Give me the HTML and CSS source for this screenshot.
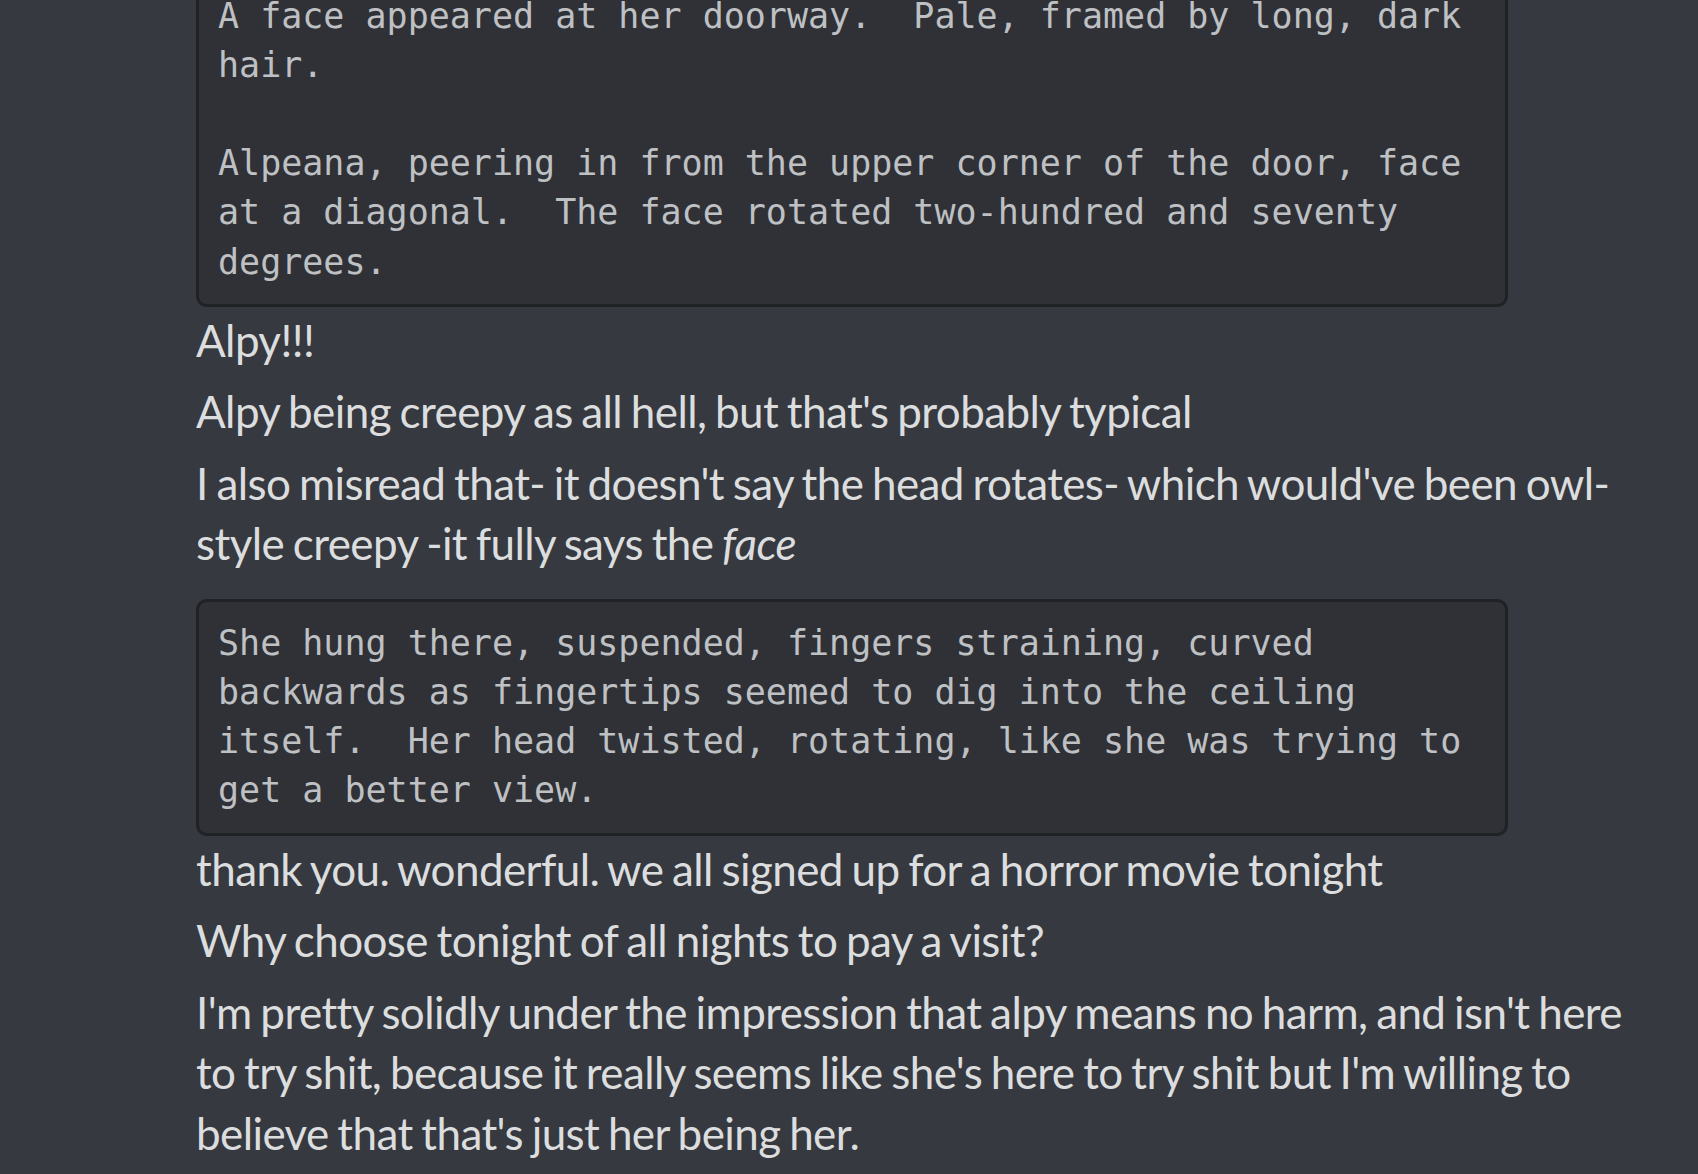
FILE: index.html
```html
<!DOCTYPE html>
<html lang="en">
<head>
<meta charset="utf-8">
<title>Chat</title>
<link rel="stylesheet" href="styles.css">
</head>
<body>
<main class="chat">
  <div class="message">
    <pre class="codeblock"><code>A face appeared at her doorway.  Pale, framed by long, dark hair.

Alpeana, peering in from the upper corner of the door, face at a diagonal.  The face rotated two-hundred and seventy degrees.</code></pre>
    <p class="text">Alpy!!!</p>
  </div>
  <div class="message">
    <p class="text">Alpy being creepy as all hell, but that's probably typical</p>
  </div>
  <div class="message">
    <p class="text">I also misread that- it doesn't say the head rotates- which would've been owl-style creepy -it fully says the <em>face</em></p>
  </div>
  <div class="message">
    <pre class="codeblock"><code>She hung there, suspended, fingers straining, curved backwards as fingertips seemed to dig into the ceiling itself.  Her head twisted, rotating, like she was trying to get a better view.</code></pre>
    <p class="text">thank you. wonderful. we all signed up for a horror movie tonight</p>
  </div>
  <div class="message">
    <p class="text">Why choose tonight of all nights to pay a visit?</p>
  </div>
  <div class="message">
    <p class="text">I'm pretty solidly under the impression that alpy means no harm, and isn't here to try shit, because it really seems like she's here to try shit but I'm willing to believe that that's just her being her.</p>
  </div>
</main>
</body>
</html>
```

FILE: styles.css
```css
html, body {
  margin: 0;
  padding: 0;
  background: #36393f;
  overflow: hidden;
}

.chat {
  margin-top: -48px;
  padding-left: 196px;
  width: 1458px;
}

.message {
  padding: 5.5px 0;
}

.codeblock {
  box-sizing: border-box;
  width: 90%;
  margin: 14px 0 3px;
  padding: 17px 19px;
  background: #2f3136;
  border: 3px solid #202225;
  border-radius: 11px;
  color: #bec0c3;
  font-family: "DejaVu Sans Mono", monospace;
  font-size: 35px;
  line-height: 49.2px;
  white-space: pre-wrap;
}

.codeblock code {
  font: inherit;
}

.text {
  margin: 0;
  color: #dcddde;
  font-family: Lato, "Noto Sans", sans-serif;
  font-size: 44px;
  line-height: 60.5px;
  letter-spacing: -0.6px;
  word-spacing: -2px;
}
```
